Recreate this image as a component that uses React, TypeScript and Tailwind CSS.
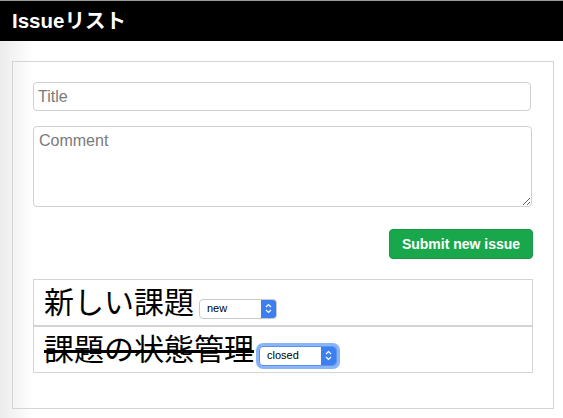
import React, { useState } from "react";

type Issue = { title: string; status: "new" | "closed" };

const FakeSelect = ({ value, focused }: { value: string; focused?: boolean }) => (
  <span
    className={`ml-[5px] inline-flex h-[20px] w-[78px] items-stretch overflow-hidden rounded-[4px] border bg-white align-[1px] text-[11px] leading-none ${
      focused ? "border-[#5b93f0] shadow-[0_0_0_3px_#8ab4f8]" : "border-[#c8c8c8]"
    }`}
  >
    <span className="flex flex-1 items-center pl-[7px] text-black">{value}</span>
    <span className="flex w-[15px] items-center justify-center bg-[#3b7ff0]">
      <svg width="7" height="11" viewBox="0 0 7 11" fill="none">
        <path d="M1 4 L3.5 1.5 L6 4" stroke="white" strokeWidth="1.2" />
        <path d="M1 7 L3.5 9.5 L6 7" stroke="white" strokeWidth="1.2" />
      </svg>
    </span>
  </span>
);

const App = () => {
  const [issues] = useState<Issue[]>([
    { title: "新しい課題", status: "new" },
    { title: "課題の状態管理", status: "closed" },
  ]);

  return (
    <div className="min-h-[418px] bg-[linear-gradient(to_right,#ececec,#ffffff_34px)] font-['Liberation_Sans','Noto_Sans_CJK_JP',sans-serif]">
      <header className="h-[41px] border-t border-[#9a9a9a] bg-black pl-[12px] text-[20.5px] font-bold leading-[39px] text-white">
        Issueリスト
      </header>

      <div className="ml-[12px] mt-[20px] w-[542px] border border-[#d4d4d4] px-[20px] pb-[35px] pt-[20px]">
        <input
          placeholder="Title"
          className="block h-[29px] w-[498px] rounded-[4px] border border-[#cfcfd4] px-[4px] text-[16px] text-black outline-none placeholder:text-[#7a7a7a]"
        />
        <textarea
          placeholder="Comment"
          className="mt-[15px] block h-[81px] w-[499px] rounded-[4px] border border-[#cfcfd4] px-[5px] pt-[2px] text-[16px] text-black outline-none placeholder:text-[#7a7a7a]"
        />
        <div className="mt-[22px] flex justify-end">
          <button className="h-[30px] w-[144px] rounded-[4px] border border-[#169a44] bg-[#18a84b] text-[14px] font-bold text-white">
            Submit new issue
          </button>
        </div>

        <ul className="mt-[20px]">
          {issues.map((issue) => (
            <li
              key={issue.title}
              className="h-[47px] border border-[#d4d4d4] pl-[10px] text-[30px] leading-[45px] text-black"
            >
              <span
                className={
                  issue.status === "closed"
                    ? "line-through decoration-[3px] decoration-black"
                    : ""
                }
              >
                {issue.title}
              </span>
              <FakeSelect value={issue.status} focused={issue.status === "closed"} />
            </li>
          ))}
        </ul>
      </div>
    </div>
  );
};

export default App;
